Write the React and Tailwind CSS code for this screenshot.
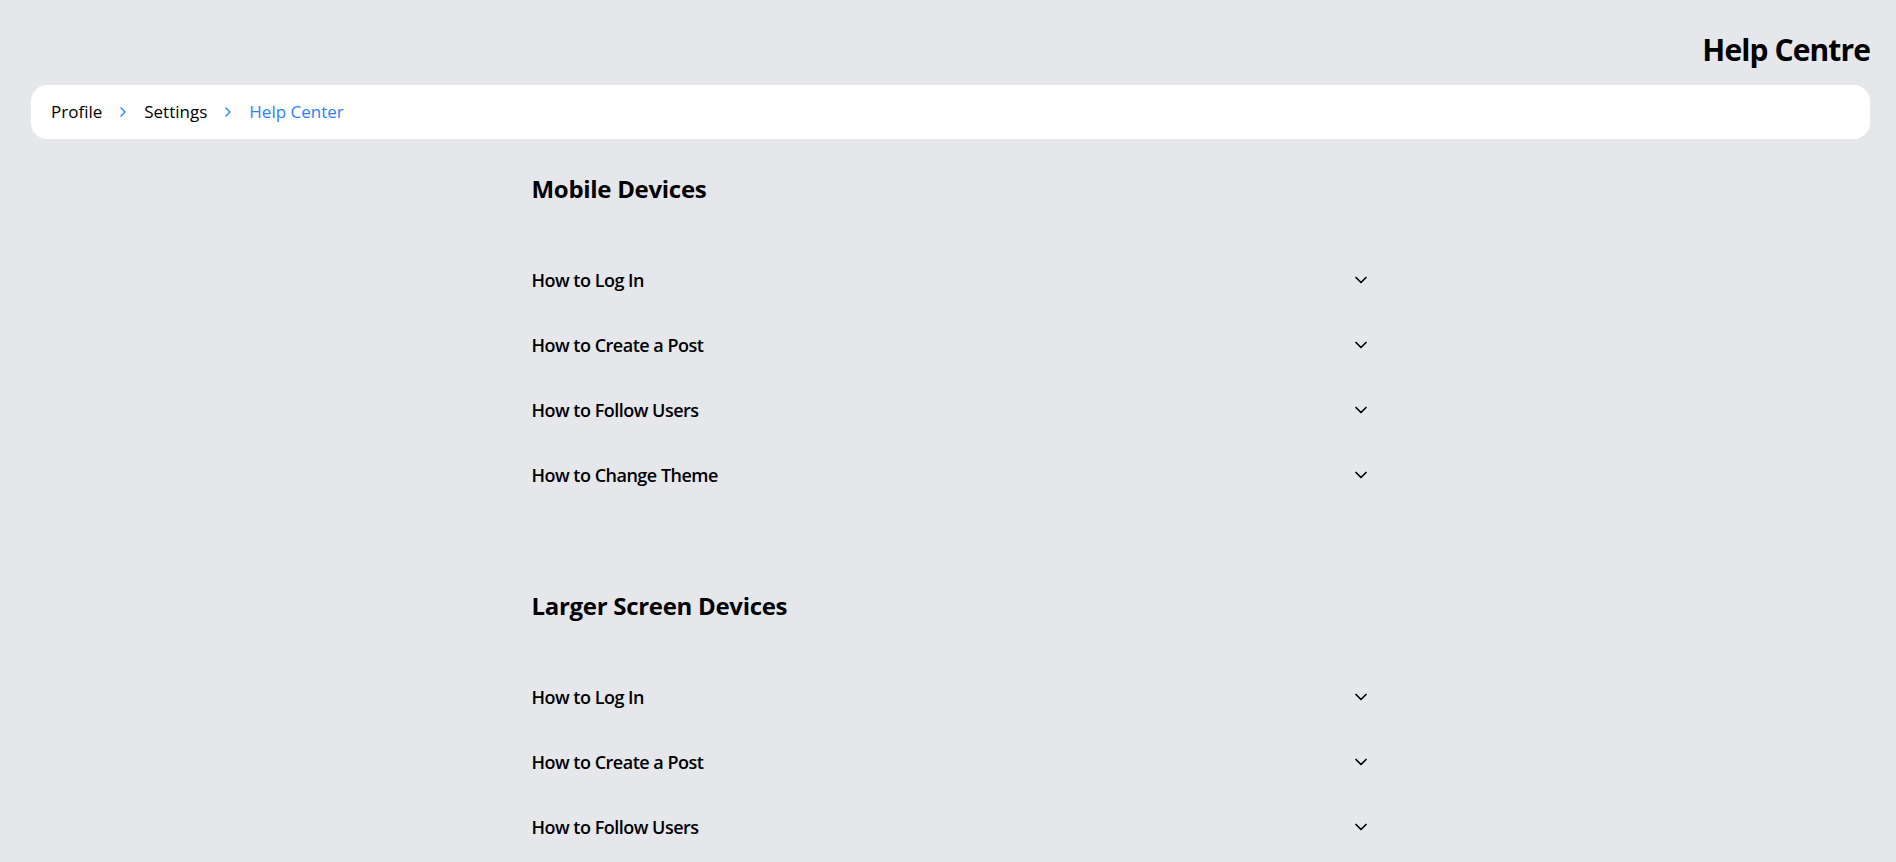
import { ChevronDown, ChevronRight } from 'lucide-react';

const sections = [
  {
    title: 'Mobile Devices',
    items: ['How to Log In', 'How to Create a Post', 'How to Follow Users', 'How to Change Theme'],
  },
  {
    title: 'Larger Screen Devices',
    items: ['How to Log In', 'How to Create a Post', 'How to Follow Users', 'How to Change Theme'],
  },
];

const crumbs = ['Profile', 'Settings', 'Help Center'];

const App = () => {
  return (
    <div className="min-h-screen bg-gray-200 pl-[31px] pr-[26px] pt-8 pb-16 font-['Open_Sans',sans-serif] text-black">
      <h1 className="mb-[17px] text-right text-3xl font-bold tracking-[-0.9px]">Help Centre</h1>

      <nav className="flex items-center gap-[13px] rounded-2xl bg-white px-5 py-[14px] text-[17px] leading-[26px]">
        {crumbs.map((crumb, i) => (
          <div key={crumb} className="flex items-center gap-[13px]">
            {i > 0 && <ChevronRight size={16} className="text-blue-500" />}
            <span className={i === crumbs.length - 1 ? 'text-blue-500' : ''}>{crumb}</span>
          </div>
        ))}
      </nav>

      <div className="mx-auto mt-[34px] w-[838px]">
        {sections.map((section) => (
          <section key={section.title} className="mb-[83px]">
            <h2 className="mb-[42px] text-2xl font-bold tracking-[-0.3px]">{section.title}</h2>
            <div>
              {section.items.map((item) => (
                <button
                  key={item}
                  className="flex h-[65px] w-full items-center justify-between text-left text-lg font-[550] tracking-[-0.5px]"
                >
                  <span>{item}</span>
                  <ChevronDown size={20} className="mr-[-1px]" />
                </button>
              ))}
            </div>
          </section>
        ))}
      </div>
    </div>
  );
};

export default App;
